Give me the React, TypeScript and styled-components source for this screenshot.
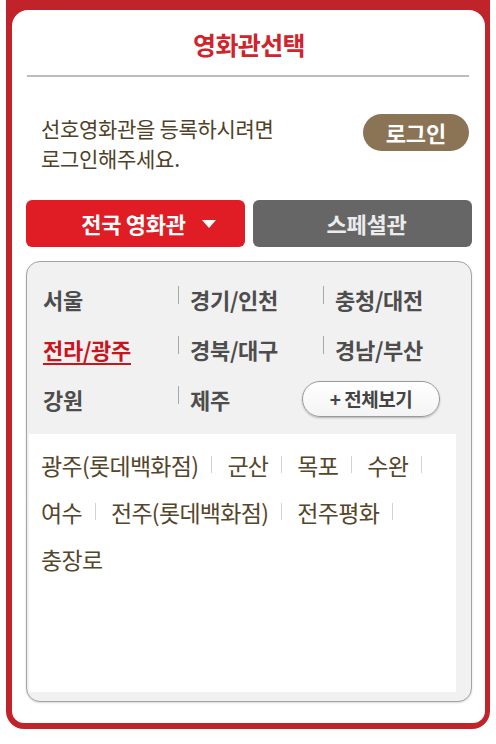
import React from "react";
import styled, { createGlobalStyle } from "styled-components";

const Global = createGlobalStyle`
  html, body { margin: 0; padding: 0; background: #ffffff; }
  body { font-family: "Noto Sans CJK KR", "Noto Sans", sans-serif; }
  * { box-sizing: border-box; }
`;

const Frame = styled.div`
  margin-left: 6px;
  width: 484px;
  height: 729px;
  background: #c1232a;
  border-radius: 0 0 18px 18px;
  padding: 10px 5px 6px 6px;
`;

const Card = styled.div`
  height: 100%;
  background: #ffffff;
  border-radius: 16px 16px 12px 12px;
  padding: 0 13px 0 14px;
  display: flex;
  flex-direction: column;
`;

const Title = styled.h1`
  margin: 0;
  height: 65px;
  display: flex;
  align-items: center;
  justify-content: center;
  padding-top: 2px;
  font-size: 25px;
  font-weight: 700;
  letter-spacing: -0.6px;
  color: #d1232b;
`;

const Divider = styled.hr`
  margin: 0 3px 0 1px;
  border: none;
  height: 2px;
  background: #bdbdbd;
`;

const InfoRow = styled.div`
  display: flex;
  justify-content: space-between;
  align-items: flex-start;
  margin-top: 36px;
  padding: 0 3px 0 15px;
`;

const InfoText = styled.p`
  margin: 0;
  font-size: 21px;
  line-height: 30px;
  letter-spacing: -0.3px;
  color: #4f4228;
`;

const LoginButton = styled.button`
  width: 106px;
  height: 37px;
  margin-top: 1px;
  border: none;
  border-radius: 19px;
  background: #8a7455;
  color: #ffffff;
  font-family: inherit;
  font-size: 22px;
  font-weight: 700;
  padding: 0 0 2px;
`;

const Tabs = styled.div`
  display: grid;
  grid-template-columns: 219px 219px;
  gap: 8px;
  margin-top: 27px;
`;

const Tab = styled.button<{ $active?: boolean }>`
  height: 47px;
  border: none;
  border-radius: 6px;
  background: ${(p) => (p.$active ? "#e01d24" : "#666666")};
  color: ${(p) => (p.$active ? "#ffffff" : "#ececec")};
  font-family: inherit;
  font-size: 22px;
  font-weight: 700;
  letter-spacing: -0.3px;
  display: flex;
  align-items: center;
  justify-content: center;
  gap: 16px;
  padding: ${(p) => (p.$active ? "0 0 2px 26px" : "0 0 2px 8px")};
`;

const Caret = styled.span`
  width: 0;
  height: 0;
  border-left: 7px solid transparent;
  border-right: 7px solid transparent;
  border-top: 8px solid #ffffff;
  margin-top: 3px;
`;

const RegionBox = styled.div`
  margin-top: 14px;
  height: 441px;
  border: 1px solid #a3a3a3;
  border-radius: 14px;
  background: #f1f1f1;
  box-shadow: 0 1px 2px rgba(0, 0, 0, 0.15);
  display: flex;
  flex-direction: column;
  overflow: hidden;
`;

const RegionGrid = styled.div`
  display: grid;
  grid-template-columns: 135px 145px 1fr;
  grid-auto-rows: 50px;
  padding: 12px 0 10px 16px;
`;

const RegionCell = styled.div<{ $sep?: boolean }>`
  display: flex;
  align-items: center;
  position: relative;
  padding-left: ${(p) => (p.$sep ? "12px" : "0")};
  &::before {
    content: "";
    display: ${(p) => (p.$sep ? "block" : "none")};
    position: absolute;
    left: 0;
    top: 12px;
    width: 1px;
    height: 18px;
    background: #a8a8a8;
  }
`;

const RegionLink = styled.a<{ $active?: boolean }>`
  font-size: 22px;
  font-weight: 700;
  letter-spacing: -0.3px;
  color: ${(p) => (p.$active ? "#c8141c" : "#4d4d4d")};
  text-decoration: ${(p) => (p.$active ? "underline" : "none")};
  text-decoration-thickness: 2px;
  text-underline-offset: 4px;
  cursor: pointer;
`;

const AllButton = styled.button`
  margin-left: -21px;
  width: 138px;
  height: 36px;
  border: 1px solid #9a9a9a;
  border-radius: 18px;
  background: linear-gradient(#ffffff, #f4f4f4);
  box-shadow: 0 1px 2px rgba(0, 0, 0, 0.25);
  font-family: inherit;
  font-size: 19px;
  font-weight: 700;
  letter-spacing: -0.5px;
  color: #444444;
  padding: 0 0 2px;
`;

const TheaterList = styled.ul`
  list-style: none;
  flex: 1;
  margin: 0 15px 9px 2px;
  padding: 7px 0 0 12px;
  background: #ffffff;
  display: flex;
  flex-wrap: wrap;
  align-content: flex-start;
`;

const TheaterItem = styled.li`
  display: flex;
  align-items: center;
  height: 47px;
`;

const TheaterName = styled.a`
  font-size: 23px;
  letter-spacing: -0.7px;
  color: #54462b;
  cursor: pointer;
`;

const ItemSep = styled.span`
  width: 1px;
  height: 17px;
  margin: 0 15px 0 13px;
  background: #d2d2d2;
`;

const regions = [
  { name: "서울" },
  { name: "경기/인천" },
  { name: "충청/대전" },
  { name: "전라/광주", active: true },
  { name: "경북/대구" },
  { name: "경남/부산" },
  { name: "강원" },
  { name: "제주" },
];

const theaters = [
  "광주(롯데백화점)",
  "군산",
  "목포",
  "수완",
  "여수",
  "전주(롯데백화점)",
  "전주평화",
  "충장로",
];

export default function App() {
  return (
    <>
      <Global />
      <Frame>
        <Card>
          <Title>영화관선택</Title>
          <Divider />
          <InfoRow>
            <InfoText>
              선호영화관을 등록하시려면
              <br />
              로그인해주세요.
            </InfoText>
            <LoginButton>로그인</LoginButton>
          </InfoRow>
          <Tabs>
            <Tab $active>
              전국 영화관
              <Caret />
            </Tab>
            <Tab>스페셜관</Tab>
          </Tabs>
          <RegionBox>
            <RegionGrid>
              {regions.map((r, i) => (
                <RegionCell key={r.name} $sep={i % 3 !== 0}>
                  <RegionLink $active={r.active}>{r.name}</RegionLink>
                </RegionCell>
              ))}
              <RegionCell>
                <AllButton>+ 전체보기</AllButton>
              </RegionCell>
            </RegionGrid>
            <TheaterList>
              {theaters.map((t, i) => (
                <TheaterItem key={t}>
                  <TheaterName>{t}</TheaterName>
                  {i < theaters.length - 1 && <ItemSep />}
                </TheaterItem>
              ))}
            </TheaterList>
          </RegionBox>
        </Card>
      </Frame>
    </>
  );
}
